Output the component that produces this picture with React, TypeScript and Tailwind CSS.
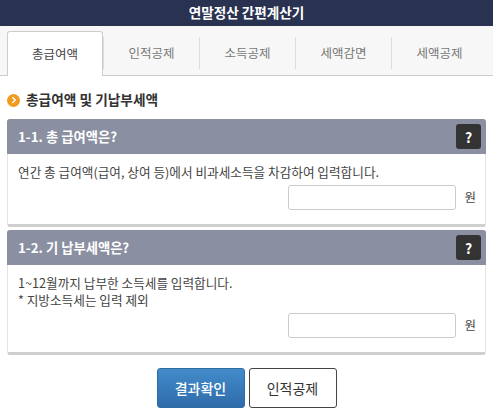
import { ChevronRight } from "lucide-react";

const FONT = "font-['Noto_Sans_CJK_KR','Noto_Sans',sans-serif]";

const tabs = ["총급여액", "인적공제", "소득공제", "세액감면", "세액공제"];

function Card({ title, lines }: { title: string; lines: string[] }) {
  return (
    <div className="rounded-[3px] bg-white border-b-[3px] border-b-[#cfcfcf] border-x border-x-[#e4e4e4]">
      <div className="h-[35px] -mx-px rounded-t-[3px] bg-[#8a8fa1] flex items-center justify-between pl-[11px] pr-[5px]">
        <h3 className="text-[13.3px] font-bold text-white leading-none">{title}</h3>
        <span className="w-[25px] h-[25px] rounded-[3px] bg-[#333333] text-white text-[14px] font-bold flex items-center justify-center leading-none">?</span>
      </div>
      <div className="pl-[10px] pr-[9px] pt-[9px] pb-[14px]">
        {lines.map((line) => (
          <p key={line} className="text-[12.65px] leading-[17px] text-[#444444]">{line}</p>
        ))}
        <div className="flex items-center justify-end mt-[5px]">
          <input className="w-[168px] h-[25px] bg-white border border-[#cccccc] rounded-[3px]" />
          <span className="w-[20px] text-right text-[12.5px] text-[#444444]">원</span>
        </div>
      </div>
    </div>
  );
}

export default function App() {
  return (
    <div className={`w-[493px] h-[418px] overflow-hidden bg-white ${FONT}`}>
      <div className="h-[26px] bg-[#2a3252] flex items-center justify-center">
        <h1 className="text-[13.6px] font-bold text-white leading-none">연말정산 간편계산기</h1>
      </div>

      {/* Tabs */}
      <div className="h-[50px] bg-[#f7f7f7] border-b border-[#cccccc] flex items-end pl-[7px] pr-[6px]">
        {tabs.map((tab, i) =>
          i === 0 ? (
            <div key={tab} className="w-[96px] h-[45px] -mb-px bg-white border border-[#cccccc] border-b-0 rounded-t-[3px] flex items-center justify-center text-[12.5px] text-[#444444]">
              {tab}
            </div>
          ) : (
            <div key={tab} className="flex-1 h-[32px] mb-[6px] border-l border-[#dddddd] flex items-center justify-center text-[12.5px] text-[#777777]">
              {tab}
            </div>
          )
        )}
      </div>

      {/* Section title */}
      <div className="flex items-center h-[43px] pt-[5px] pl-[7px] gap-[6px]">
        <span className="w-[13px] h-[13px] rounded-full bg-[#f09a1f] flex items-center justify-center">
          <ChevronRight size={10} strokeWidth={3.5} className="text-white" />
        </span>
        <h2 className="text-[13.7px] font-bold text-[#333333] leading-none">총급여액 및 기납부세액</h2>
      </div>

      <div className="px-[7px] flex flex-col gap-[3px]">
        <Card title="1-1. 총 급여액은?" lines={["연간 총 급여액(급여, 상여 등)에서 비과세소득을 차감하여 입력합니다."]} />
        <Card title="1-2. 기 납부세액은?" lines={["1~12월까지 납부한 소득세를 입력합니다.", "* 지방소득세는 입력 제외"]} />
      </div>

      <div className="flex justify-center gap-[4px] mt-[13px]">
        <button className="w-[88px] h-[40px] rounded-[3px] border border-[#2e6da4] bg-gradient-to-b from-[#428bca] to-[#2f6cab] text-white text-[14px] font-medium">결과확인</button>
        <button className="w-[88px] h-[40px] rounded-[3px] border border-[#444444] bg-white text-[#333333] text-[14px]">인적공제</button>
      </div>
    </div>
  );
}
